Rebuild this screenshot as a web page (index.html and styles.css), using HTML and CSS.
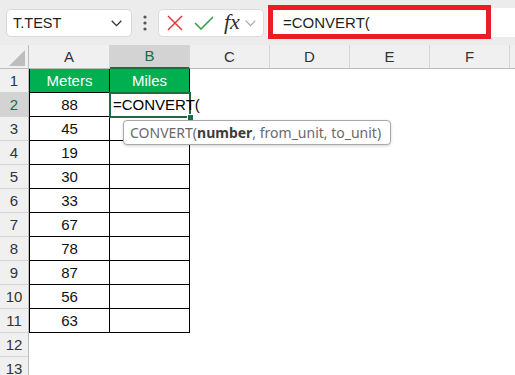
FILE: index.html
```html
<!DOCTYPE html>
<html>
<head>
<meta charset="utf-8">
<link rel="stylesheet" href="styles.css">
</head>
<body>
<div class="toolbar">
  <div class="namebox"><span>T.TEST</span>
    <svg class="chev" width="11" height="7" viewBox="0 0 11 7"><polyline points="0.7,0.7 5.5,5.6 10.3,0.7" fill="none" stroke="#333" stroke-width="1.3"/></svg>
  </div>
  <div class="dots"><svg width="4" height="16" viewBox="0 0 4 16"><circle cx="2" cy="2" r="1.6" fill="#555"/><circle cx="2" cy="8" r="1.6" fill="#555"/><circle cx="2" cy="14" r="1.6" fill="#555"/></svg></div>
  <div class="fxbox">
    <svg class="ico-x" width="16" height="16" viewBox="0 0 16 16"><path d="M1 1 L15 15 M15 1 L1 15" stroke="#e23a3c" stroke-width="1.5" fill="none"/></svg>
    <svg class="ico-ok" width="20" height="14" viewBox="0 0 20 14"><polyline points="1,7 7,13 19,1" stroke="#3aa146" stroke-width="1.6" fill="none"/></svg>
    <span class="fx">fx</span>
    <svg class="chev2" width="11" height="7" viewBox="0 0 11 7"><polyline points="0.7,0.7 5.5,5.6 10.3,0.7" fill="none" stroke="#a8a8a8" stroke-width="1.2"/></svg>
  </div>
  <div class="formula">=CONVERT(<div class="highlight"></div></div>
</div>

<div class="sheet">
  <div class="ch corner"><div class="tri"></div></div>
  <div class="ch">A</div>
  <div class="ch sel">B</div>
  <div class="ch">C</div>
  <div class="ch">D</div>
  <div class="ch">E</div>
  <div class="ch">F</div>
  <div class="ch last"></div>

  <div class="rh">1</div><div class="t a hd">Meters</div><div class="t hd">Miles</div><div class="fill"></div>
  <div class="rh sel">2</div><div class="t a">88</div>
  <div class="t b2"><div class="active"><div class="handle"></div></div><span class="val">=CONVERT(</span>
    <div class="tip">CONVERT(<b>number</b>, from_unit, to_unit)</div>
  </div><div class="fill"></div>
  <div class="rh">3</div><div class="t a">45</div><div class="t"></div><div class="fill"></div>
  <div class="rh">4</div><div class="t a">19</div><div class="t"></div><div class="fill"></div>
  <div class="rh">5</div><div class="t a">30</div><div class="t"></div><div class="fill"></div>
  <div class="rh">6</div><div class="t a">33</div><div class="t"></div><div class="fill"></div>
  <div class="rh">7</div><div class="t a">67</div><div class="t"></div><div class="fill"></div>
  <div class="rh">8</div><div class="t a">78</div><div class="t"></div><div class="fill"></div>
  <div class="rh">9</div><div class="t a">87</div><div class="t"></div><div class="fill"></div>
  <div class="rh">10</div><div class="t a">56</div><div class="t"></div><div class="fill"></div>
  <div class="rh">11</div><div class="t a">63</div><div class="t"></div><div class="fill"></div>
  <div class="rh">12</div><div class="e"></div><div class="e"></div><div class="fill"></div>
  <div class="rh">13</div><div class="e"></div><div class="e"></div><div class="fill"></div>
</div>
</body>
</html>
```
FILE: styles.css
```css
html, body {
  margin: 0;
  padding: 0;
  width: 515px;
  height: 375px;
  overflow: hidden;
  background: #fff;
  font-family: "Liberation Sans", Arial, sans-serif;
}

.toolbar {
  height: 45px;
  box-sizing: border-box;
  background: #ececec;
  display: flex;
  align-items: flex-start;
  padding-top: 9px;
}

.namebox {
  margin-left: 6px;
  width: 126px;
  height: 28px;
  box-sizing: border-box;
  background: #fff;
  border: 1px solid #d9d9d9;
  border-radius: 5px;
  display: flex;
  align-items: center;
  justify-content: space-between;
  padding: 0 9px 0 6px;
  font-size: 14.5px;
  color: #1f1f1f;
}

.dots {
  width: 26px;
  height: 28px;
  display: flex;
  align-items: center;
  justify-content: center;
}

.fxbox {
  width: 106px;
  height: 28px;
  box-sizing: border-box;
  background: #fff;
  border: 1px solid #dcdcdc;
  border-radius: 5px;
  display: flex;
  align-items: center;
  padding-left: 8px;
}

.ico-ok { margin-left: 11px; margin-top: -1px; }

.fx {
  font-family: "Liberation Serif", "Times New Roman", serif;
  font-style: italic;
  font-size: 22px;
  color: #2e2e2e;
  margin-left: 10px;
  margin-top: -2px;
}

.chev2 { margin-left: 5px; }

.formula {
  position: relative;
  margin-left: 3px;
  margin-top: -1px;
  flex: 1;
  height: 29px;
  line-height: 29px;
  background: #fff;
  padding-left: 16px;
  font-size: 15px;
  color: #1f1f1f;
}

.highlight {
  position: absolute;
  left: 1px;
  top: -3px;
  width: 223px;
  height: 34px;
  box-sizing: border-box;
  border: 5px solid #ea1c26;
}

.sheet {
  display: grid;
  grid-template-columns: 29px 81px 80px 80px 80px 80px 80px 1fr;
  grid-auto-rows: 24px;
  font-size: 15px;
}

.sheet > div { box-sizing: border-box; }

.fill { grid-column: span 5; }

.ch {
  background: #f0f0f0;
  border-right: 1px solid #d5d5d5;
  border-bottom: 1px solid #bcbcbc;
  text-align: center;
  line-height: 23px;
  color: #333;
}

.ch.last { border-right: none; }

.ch.sel {
  background: #d3d3d3;
  color: #1e6b41;
  border-bottom: 2px solid #1e6b41;
  line-height: 22px;
}

.corner {
  display: flex;
  justify-content: flex-end;
  align-items: flex-end;
  padding: 0 3px 2px 0;
  border-right: 1px solid #bcbcbc;
}

.tri {
  width: 16px;
  height: 16px;
  background: #bdbdbd;
  clip-path: polygon(100% 0, 100% 100%, 0 100%);
}

.rh {
  background: #f0f0f0;
  border-right: 1px solid #bcbcbc;
  border-bottom: 1px solid #d5d5d5;
  text-align: center;
  line-height: 23px;
  color: #333;
}

.rh.sel {
  background: #d3d3d3;
  color: #1e6b41;
}

.t {
  border-right: 1px solid #000;
  border-bottom: 1px solid #000;
  text-align: center;
  line-height: 23px;
  color: #111;
  white-space: nowrap;
}

.t.a { border-left: 1px solid #000; }

.t.hd {
  background: #00b050;
  color: #fff;
}

.b2 {
  position: relative;
  z-index: 2;
  text-align: left;
  padding-left: 3px;
  color: #000;
}

.val {
  position: relative;
  z-index: 1;
}

.active {
  position: absolute;
  left: -1px;
  top: -1px;
  right: -2px;
  bottom: -2px;
  border: 2px solid #1e6b41;
}

.handle {
  position: absolute;
  right: -5px;
  bottom: -5px;
  width: 5px;
  height: 5px;
  background: #1e6b41;
  border: 1px solid #fff;
}

.tip {
  position: absolute;
  z-index: 2;
  left: 13px;
  top: 27px;
  width: 268px;
  height: 25px;
  box-sizing: border-box;
  background: #fff;
  border: 1px solid #a9a9a9;
  border-radius: 4px;
  box-shadow: 0 1px 3px rgba(0, 0, 0, 0.18);
  padding-left: 6px;
  font-family: "Noto Sans", "Open Sans", sans-serif;
  font-size: 14px;
  line-height: 23px;
  color: #6a6a6a;
}

.tip b {
  color: #3d3d3d;
  font-weight: 700;
}
```
